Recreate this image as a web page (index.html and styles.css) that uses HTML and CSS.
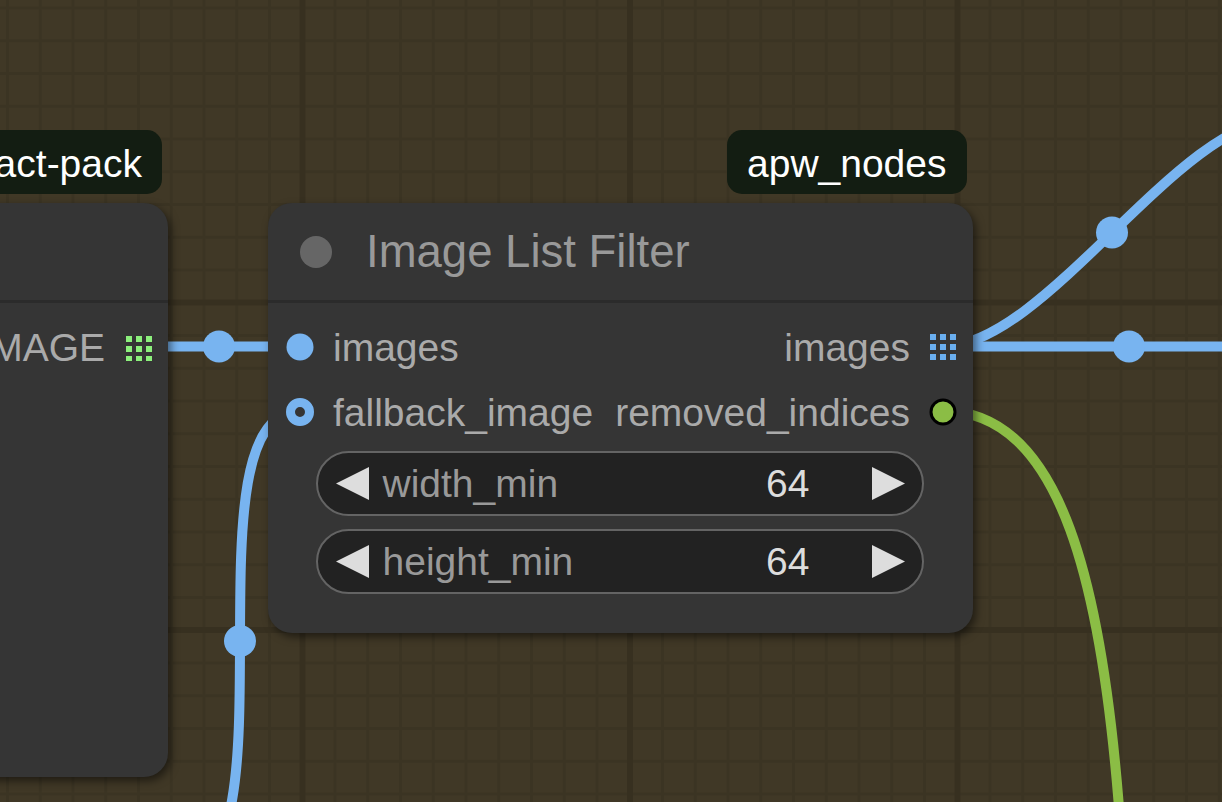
FILE: index.html
```html
<!DOCTYPE html>
<html>
<head>
<meta charset="utf-8">
<link rel="stylesheet" href="styles.css">
</head>
<body>
<div class="canvas">
  <svg class="links" width="1222" height="802" viewBox="0 0 1222 802">
    <g fill="none" stroke-width="10" stroke-linecap="butt">
      <path class="link-blue" d="M140 346.5 L300 346.5"/>
      <path class="link-blue" d="M943 346.5 L1320 346.5"/>
      <path class="link-blue" d="M943 346.5 C1045 346.5 1179 119 1281 119"/>
      <path class="link-blue" d="M180 871 C299 871 181 411 300 411"/>
      <path class="link-green" d="M943 411 C1060 411 1105 580 1122 850"/>
    </g>
    <g class="link-dots">
      <circle cx="219" cy="346.5" r="16"/>
      <circle cx="1129" cy="346.5" r="16"/>
      <circle cx="1112" cy="232.5" r="16"/>
      <circle cx="240" cy="641" r="16"/>
    </g>
  </svg>

  <div class="badge badge-left">comfyui-impact-pack</div>
  <div class="badge badge-main">apw_nodes</div>

  <div class="node node-left">
    <div class="node-title"></div>
    <div class="node-body">
      <div class="slot-row">
        <div class="slot slot-in"></div>
        <div class="slot slot-out">
          <span class="slot-label">IMAGE</span>
          <svg class="slot-icon" width="28" height="28" viewBox="0 0 28 28">
            <g class="grid-green">
              <rect x="1" y="3" width="6" height="6"/><rect x="11" y="3" width="6" height="6"/><rect x="21" y="3" width="6" height="6"/>
              <rect x="1" y="13" width="6" height="6"/><rect x="11" y="13" width="6" height="6"/><rect x="21" y="13" width="6" height="6"/>
              <rect x="1" y="23" width="6" height="6"/><rect x="11" y="23" width="6" height="6"/><rect x="21" y="23" width="6" height="6"/>
            </g>
          </svg>
        </div>
      </div>
    </div>
  </div>

  <div class="node node-main">
    <div class="node-title">
      <span class="title-dot"></span>
      <span class="title-text">Image List Filter</span>
    </div>
    <div class="node-body">
      <div class="slot-row">
        <div class="slot slot-in">
          <svg class="slot-icon" width="28" height="28" viewBox="0 0 28 28">
            <circle class="dot-blue" cx="14" cy="14" r="13.5"/>
          </svg>
          <span class="slot-label">images</span>
        </div>
        <div class="slot slot-out">
          <span class="slot-label">images</span>
          <svg class="slot-icon" width="28" height="28" viewBox="0 0 28 28">
            <g class="grid-blue">
              <rect x="1" y="1" width="6" height="6"/><rect x="11" y="1" width="6" height="6"/><rect x="21" y="1" width="6" height="6"/>
              <rect x="1" y="11" width="6" height="6"/><rect x="11" y="11" width="6" height="6"/><rect x="21" y="11" width="6" height="6"/>
              <rect x="1" y="21" width="6" height="6"/><rect x="11" y="21" width="6" height="6"/><rect x="21" y="21" width="6" height="6"/>
            </g>
          </svg>
        </div>
      </div>
      <div class="slot-row">
        <div class="slot slot-in">
          <svg class="slot-icon" width="28" height="28" viewBox="0 0 28 28">
            <circle class="ring-blue" cx="14" cy="14" r="9.5"/>
          </svg>
          <span class="slot-label">fallback_image</span>
        </div>
        <div class="slot slot-out">
          <span class="slot-label">removed_indices</span>
          <svg class="slot-icon" width="28" height="28" viewBox="0 0 28 28">
            <circle class="dot-green" cx="14" cy="14" r="12"/>
          </svg>
        </div>
      </div>

      <div class="widget">
        <svg class="arrow" width="33" height="33" viewBox="0 0 33 33"><polygon points="33,0 0,16.5 33,33"/></svg>
        <span class="w-label">width_min</span>
        <span class="w-value">64</span>
        <svg class="arrow arrow-r" width="33" height="33" viewBox="0 0 33 33"><polygon points="0,0 33,16.5 0,33"/></svg>
      </div>
      <div class="widget">
        <svg class="arrow" width="33" height="33" viewBox="0 0 33 33"><polygon points="33,0 0,16.5 33,33"/></svg>
        <span class="w-label">height_min</span>
        <span class="w-value">64</span>
        <svg class="arrow arrow-r" width="33" height="33" viewBox="0 0 33 33"><polygon points="0,0 33,16.5 0,33"/></svg>
      </div>
    </div>
  </div>
</div>
</body>
</html>
```

FILE: styles.css
```css
html, body {
  margin: 0;
  padding: 0;
}

body {
  width: 1222px;
  height: 802px;
  overflow: hidden;
  font-family: "Liberation Sans", Arial, sans-serif;
  background-color: #403826;
  background-image:
    linear-gradient(to right, #373020 6px, transparent 6px),
    linear-gradient(to bottom, #373020 6px, transparent 6px),
    linear-gradient(to right, #3b3423 2.5px, transparent 2.5px),
    linear-gradient(to bottom, #3b3423 2.5px, transparent 2.5px);
  background-size: 327.5px 327.5px, 327.5px 327.5px, 32.75px 32.75px, 32.75px 32.75px;
  background-position: 299.5px 0, 0 299.5px, 6px 0, 0 6.5px;
}

.canvas {
  position: relative;
  width: 1222px;
  height: 802px;
}

.links {
  position: absolute;
  left: 0;
  top: 0;
  z-index: 0;
}

.link-blue { stroke: #78b4f0; }
.link-green { stroke: #8bbd45; }
.link-dots circle { fill: #78b4f0; }

.badge {
  position: absolute;
  top: 130px;
  height: 64px;
  box-sizing: border-box;
  padding: 3px 20px 0 20px;
  display: flex;
  align-items: center;
  background: #131d12;
  color: #ffffff;
  font-size: 39px;
  border-radius: 15px;
  white-space: nowrap;
  z-index: 2;
}

.badge-main { left: 727px; }
.badge-left { right: 1060px; }

.node {
  position: absolute;
  top: 203px;
  box-sizing: border-box;
  background: #353535;
  border-radius: 24px;
  box-shadow: 3px 4px 9px rgba(0, 0, 0, 0.5);
  display: flex;
  flex-direction: column;
  z-index: 1;
}

.node-left {
  left: -300px;
  width: 468px;
  height: 574px;
}

.node-main {
  left: 268px;
  width: 705px;
  height: 430px;
}

.node-title {
  height: 97px;
  border-bottom: 3px solid #2b2b2b;
  display: flex;
  align-items: center;
  padding-left: 32px;
  flex: none;
}

.title-dot {
  width: 32px;
  height: 32px;
  border-radius: 50%;
  background: #666666;
  flex: none;
}

.title-text {
  margin-left: 34px;
  font-size: 45.5px;
  color: #999999;
  white-space: nowrap;
}

.node-body {
  padding-top: 12px;
  display: flex;
  flex-direction: column;
}

.slot-row {
  height: 65px;
  display: flex;
  align-items: center;
  justify-content: space-between;
}

.slot {
  display: flex;
  align-items: center;
  gap: 19px;
  font-size: 39px;
  color: #aaaaaa;
  white-space: nowrap;
}

.slot-in { padding-left: 18px; }
.slot-out { padding-right: 16px; }

.slot-icon { display: block; flex: none; margin-top: -2px; }

.node-left .slot-out { padding-right: 15px; gap: 20px; }

.dot-blue { fill: #78b4f0; }
.ring-blue { fill: #353535; stroke: #78b4f0; stroke-width: 9; }
.dot-green { fill: #8bbd45; stroke: #000000; stroke-width: 3; }
.grid-blue rect { fill: #6aaff0; }
.grid-green rect { fill: #8cf07c; }

.widget {
  margin: 6px 49px 6px 48px;
  height: 65px;
  box-sizing: border-box;
  border: 2px solid #646464;
  border-radius: 33px;
  background: #222222;
  display: flex;
  align-items: center;
  padding: 0 17.5px;
  font-size: 39px;
}

.widget + .widget { margin-top: 7px; }

.arrow { display: block; flex: none; }
.arrow polygon { fill: #dddddd; }

.w-label {
  margin-left: 14px;
  color: #999999;
}

.w-value {
  margin-left: auto;
  margin-right: -2px;
  color: #dddddd;
}

.arrow-r { margin-left: 64px; }
```
